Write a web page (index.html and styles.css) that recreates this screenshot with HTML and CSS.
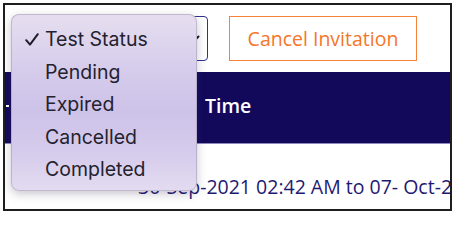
FILE: index.html
```html
<!DOCTYPE html>
<html>
<head>
<meta charset="utf-8">
<link rel="stylesheet" href="styles.css">
</head>
<body>
<div class="frame">
  <div class="toolbar">
    <div class="select">
      <span class="select-label">Test Status</span>
      <svg class="chevron" width="12" height="8" viewBox="0 0 12 8"><path d="M1.5 1.5 L6 6 L10.5 1.5" fill="none" stroke="#111" stroke-width="2" stroke-linecap="round"/></svg>
    </div>
    <button class="cancel-btn">Cancel Invitation</button>
  </div>
  <div class="thead">
    <span class="th-dash"></span>
    <span class="th-time">Time</span>
  </div>
  <div class="trow">
    <div class="date">30-Sep-2021 02:42 AM to 07- Oct-2021</div>
    <div class="date sub">02:42 AM (IST)</div>
  </div>
  <div class="menu">
    <div class="item"><span class="check"><svg width="14" height="13" viewBox="0 0 14 13"><path d="M1.2 7.2 L5 11.6 L12.8 1.2" fill="none" stroke="#1f1d2a" stroke-width="2" stroke-linecap="round" stroke-linejoin="round"/></svg></span><span>Test Status</span></div>
    <div class="item"><span class="check"></span><span>Pending</span></div>
    <div class="item"><span class="check"></span><span>Expired</span></div>
    <div class="item"><span class="check"></span><span>Cancelled</span></div>
    <div class="item"><span class="check"></span><span>Completed</span></div>
  </div>
</div>
</body>
</html>
```

FILE: styles.css
```css
html, body {
  margin: 0;
  padding: 0;
  background: #ffffff;
}
body {
  font-family: "Open Sans", "Liberation Sans", sans-serif;
  width: 456px;
  height: 216px;
  overflow: hidden;
}
.frame {
  position: relative;
  margin: 3px 0 0 3px;
  width: 445px;
  height: 204px;
  border: 2px solid #1e1e1e;
  overflow: hidden;
  background: #ffffff;
}
.toolbar {
  height: 67px;
  box-sizing: border-box;
  padding: 11px 0 0 7px;
  display: flex;
  gap: 21px;
}
.select {
  width: 196px;
  height: 45px;
  box-sizing: border-box;
  border: 1.5px solid #33318a;
  border-radius: 4px;
  display: flex;
  align-items: center;
  justify-content: space-between;
  padding: 0 7px 0 12px;
  font-size: 18px;
  color: #222;
}
.chevron {
  display: block;
}
.cancel-btn {
  width: 188px;
  height: 45px;
  box-sizing: border-box;
  border: 1.5px solid #f6823c;
  background: #ffffff;
  color: #f5762a;
  font-family: "Open Sans", sans-serif;
  font-size: 19.5px;
  padding: 0 0 1px 0;
  border-radius: 0;
}
.thead {
  height: 72px;
  box-sizing: border-box;
  background: #12095b;
  border-bottom: 1px solid #8f89c0;
  display: flex;
  align-items: center;
  padding: 0 0 4px 0;
  color: #ffffff;
  font-size: 19.5px;
  font-weight: 600;
}
.th-dash {
  width: 200px;
  height: 20px;
  display: flex;
  align-items: center;
}
.th-dash::before {
  content: "";
  display: block;
  width: 3px;
  height: 2px;
  margin-left: 1px;
  background: #ffffff;
}
.th-time {
  display: block;
}
.trow {
  padding: 29px 0 0 133px;
}
.date {
  color: #1e1a72;
  font-size: 19.5px;
  line-height: 27px;
  white-space: nowrap;
}
.date.sub {
  color: #a9a7c4;
  margin-top: 4px;
}
.menu {
  position: absolute;
  left: 6px;
  top: 9px;
  width: 186px;
  height: 177px;
  box-sizing: border-box;
  padding: 8px 0 0 0;
  border-radius: 8px;
  background: linear-gradient(180deg, #e6deef 0%, #d6cdec 30%, #cdc2e8 55%, #d6ccec 80%, #e3dbf0 100%);
  border: 1px solid rgba(150, 140, 170, 0.45);
  box-shadow: 0 3px 10px rgba(60, 50, 80, 0.28);
  font-family: "Inter", "Liberation Sans", sans-serif;
  font-size: 19.5px;
  color: #24222f;
}
.item {
  height: 32.5px;
  display: flex;
  align-items: center;
  padding-left: 13px;
  white-space: nowrap;
}
.check {
  width: 20px;
  display: flex;
  align-items: center;
}
.check svg {
  display: block;
}
```
